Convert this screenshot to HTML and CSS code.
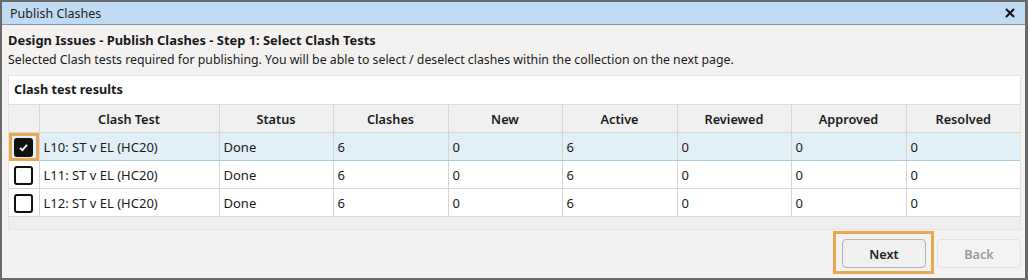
FILE: index.html
```html
<!DOCTYPE html>
<html lang="en">
<head>
    <meta charset="UTF-8">
    <title>Publish Clashes</title>
    <link rel="stylesheet" href="styles.css">
</head>
<body>
    <div class="ventana">
        <div class="titulo">
            <span>Publish Clashes</span>
            <svg class="cerrar" width="10" height="10" viewBox="0 0 10 10">
                <path d="M1 1 L9 9 M9 1 L1 9" stroke="#111" stroke-width="2"/>
            </svg>
        </div>

        <div class="contenido">
            <h1>Design Issues - Publish Clashes - Step 1: Select Clash Tests</h1>
            <p class="descripcion">Selected Clash tests required for publishing. You will be able to select / deselect clashes within the collection on the next page.</p>

            <div class="panel">
                <div class="panelTitulo">Clash test results</div>
                <table>
                    <colgroup>
                        <col style="width:30px">
                        <col style="width:180px">
                        <col style="width:114px">
                        <col style="width:115px">
                        <col style="width:114px">
                        <col style="width:115px">
                        <col style="width:114px">
                        <col style="width:115px">
                        <col>
                    </colgroup>
                    <thead>
                        <tr>
                            <th></th>
                            <th>Clash Test</th>
                            <th>Status</th>
                            <th>Clashes</th>
                            <th>New</th>
                            <th>Active</th>
                            <th>Reviewed</th>
                            <th>Approved</th>
                            <th>Resolved</th>
                        </tr>
                    </thead>
                    <tbody>
                        <tr class="seleccionada">
                            <td class="check marcado"><span class="caja"><svg width="13" height="13" viewBox="0 0 13 13"><path d="M3 6.8 L5.4 9.2 L10 3.8" stroke="#fff" stroke-width="1.8" fill="none"/></svg></span></td>
                            <td>L10: ST v EL (HC20)</td>
                            <td>Done</td>
                            <td>6</td>
                            <td>0</td>
                            <td>6</td>
                            <td>0</td>
                            <td>0</td>
                            <td>0</td>
                        </tr>
                        <tr>
                            <td class="check"><span class="caja"></span></td>
                            <td>L11: ST v EL (HC20)</td>
                            <td>Done</td>
                            <td>6</td>
                            <td>0</td>
                            <td>6</td>
                            <td>0</td>
                            <td>0</td>
                            <td>0</td>
                        </tr>
                        <tr>
                            <td class="check"><span class="caja"></span></td>
                            <td>L12: ST v EL (HC20)</td>
                            <td>Done</td>
                            <td>6</td>
                            <td>0</td>
                            <td>6</td>
                            <td>0</td>
                            <td>0</td>
                            <td>0</td>
                        </tr>
                    </tbody>
                </table>
                <div class="pie"></div>
            </div>

            <div class="botones">
                <div class="resaltado"><button class="siguiente">Next</button></div>
                <button class="atras" disabled>Back</button>
            </div>
        </div>
    </div>
</body>
</html>
```

FILE: styles.css
```css
body {
    margin: 0;
    background: #f3f2f1;
    font-family: "Noto Sans", "Open Sans", sans-serif;
    font-size: 12.3px;
    color: #1a1a1a;
}

.ventana {
    width: 1028px;
    height: 280px;
    box-sizing: border-box;
    border: 2px solid #6a6a6a;
    border-right-width: 3px;
    background: #f3f2f1;
    display: flex;
    flex-direction: column;
}

.titulo {
    height: 22px;
    background: #bfdaf3;
    border-bottom: 1px solid #8a9aa8;
    display: flex;
    align-items: center;
    justify-content: space-between;
    padding: 0 8px 0 8px;
    font-size: 12.5px;
    color: #222;
}

.cerrar {
    margin-right: 2px;
}

.contenido {
    padding: 0 4px 0 6px;
    flex: 1;
    display: flex;
    flex-direction: column;
}

h1 {
    font-size: 12.9px;
    font-weight: bold;
    margin: 6px 0 0 0;
    line-height: 18px;
}

.descripcion {
    margin: 2px 0 0 0;
    line-height: 18px;
}

.panel {
    margin-top: 6px;
    background: #eeeeee;
    border: 1px solid #e4e4e4;
}

.panelTitulo {
    background: #fff;
    height: 28px;
    line-height: 27px;
    padding-left: 5px;
    font-weight: bold;
    font-size: 12.7px;
    border-bottom: 1px solid #dcdcdc;
}

table {
    width: 100%;
    border-collapse: collapse;
    table-layout: fixed;
    background: #fff;
}

th {
    background: #f0f0f0;
    font-weight: 600;
    font-size: 12.7px;
    height: 27px;
    border: 1px solid #d6d6d6;
    border-top: none;
    padding: 0;
}

td {
    height: 27px;
    border: 1px solid #d6d6d6;
    padding: 0 0 0 4px;
    white-space: nowrap;
    font-size: 13px;
}

th:first-child, td:first-child {
    border-left: none;
}

th:last-child, td:last-child {
    border-right: none;
}

tr.seleccionada td {
    background: #e1eff7;
    border-top-color: #a9cde0;
    border-bottom-color: #a9cde0;
}

td.check {
    padding: 0;
    text-align: center;
}

.caja {
    display: inline-block;
    width: 15px;
    height: 15px;
    border: 2px solid #111;
    border-radius: 3px;
    vertical-align: middle;
    background: #fff;
}

td.marcado {
    outline: 3px solid #e8a84f;
    outline-offset: -3px;
}

.marcado .caja {
    background: #111;
    line-height: 0;
}

.marcado svg {
    margin-top: 1px;
}

.pie {
    height: 12px;
}

.botones {
    display: flex;
    justify-content: flex-end;
    gap: 3px;
    margin-top: 1px;
}

.resaltado {
    border: 3px solid #e8a84f;
    padding: 5px 5px 3px 6px;
}

button {
    font-family: inherit;
    font-size: 12.7px;
    width: 84px;
    height: 29px;
    border-radius: 4px;
    background: #f0f0f0;
    border: 1px solid #b4b4b4;
    font-weight: 600;
    color: #222;
}

.atras {
    margin-top: 8px;
    color: #9a9a9a;
    border-color: #e2e2e2;
    background: #f3f3f3;
}
```
